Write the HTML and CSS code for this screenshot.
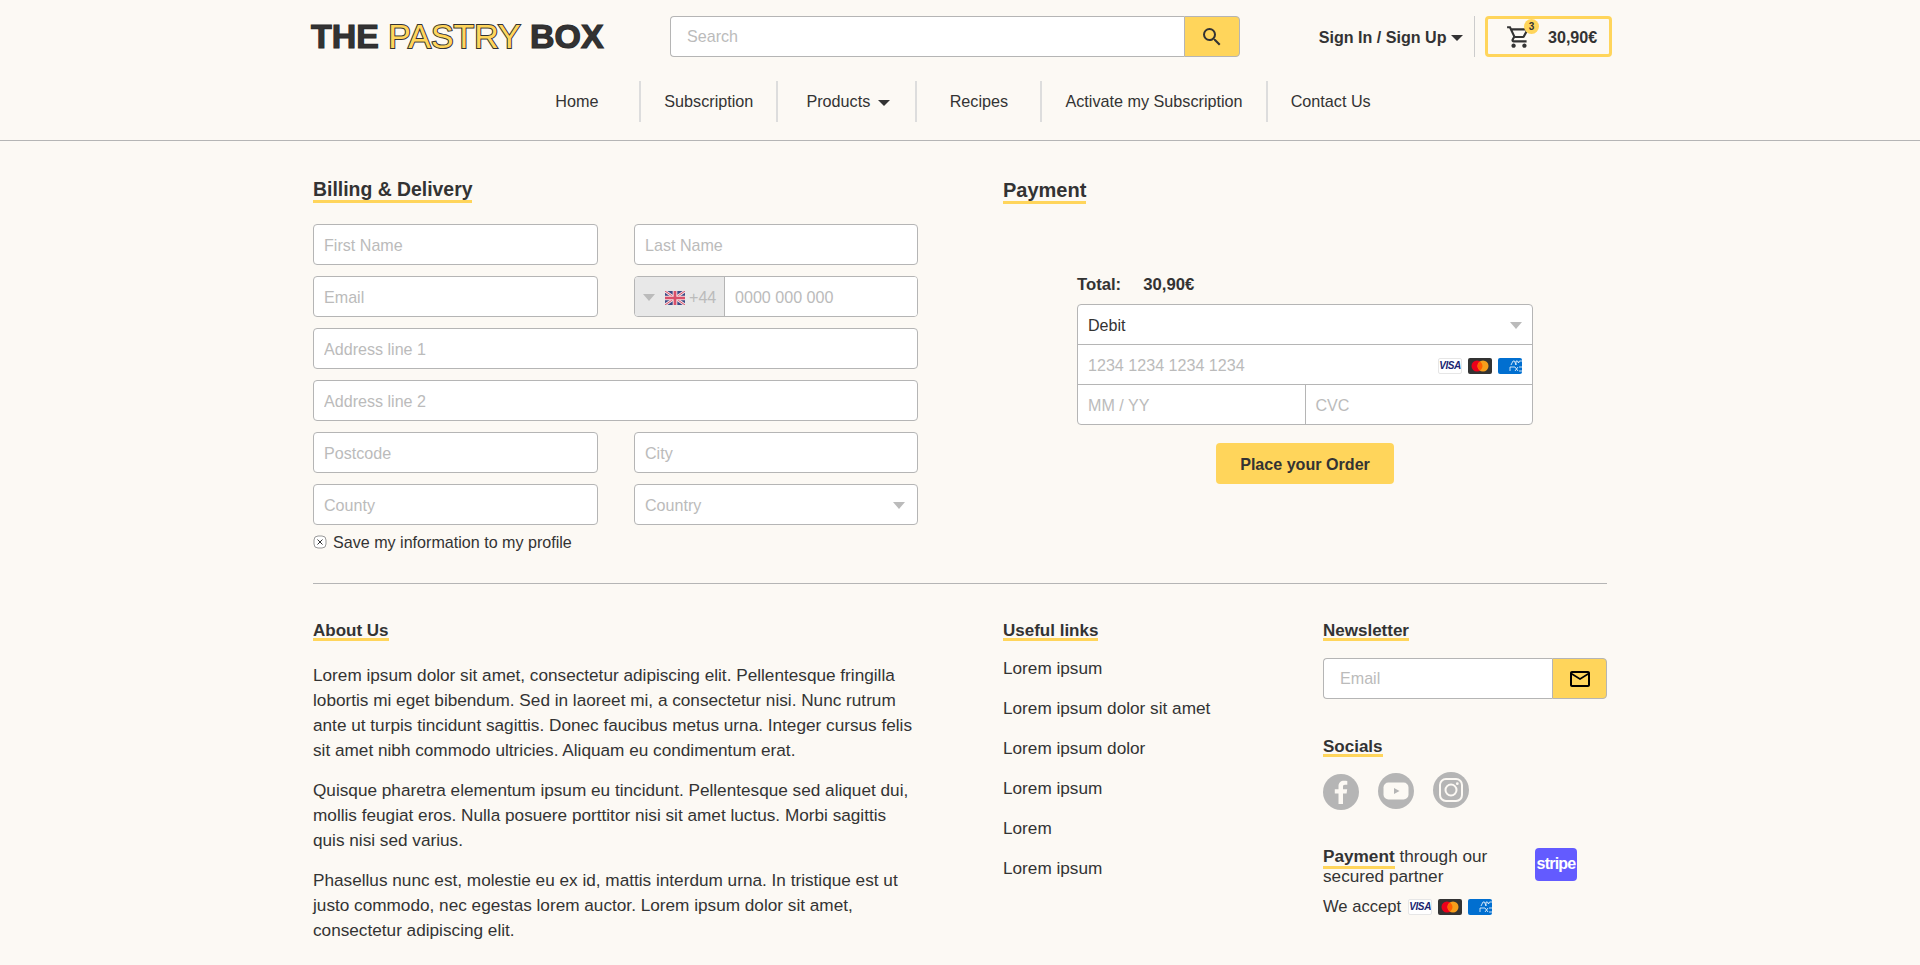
FILE: index.html
```html
<!DOCTYPE html>
<html lang="en">
<head>
<meta charset="UTF-8">
<title>The Pastry Box - Checkout</title>
<link rel="stylesheet" href="styles.css">
</head>
<body>

<!-- header -->
<header class="site-header">
  <div class="top-row">
    <a class="logo" href="#">THE <span class="logo-mid">PASTRY</span> BOX</a>
    <form class="search">
      <input type="text" placeholder="Search">
      <button type="button" class="search-button">
        <svg width="24" height="24" viewBox="0 0 24 24"><path fill="#333" d="M15.5 14h-.79l-.28-.27A6.47 6.47 0 0 0 16 9.5 6.5 6.5 0 1 0 9.5 16c1.61 0 3.09-.59 4.23-1.57l.27.28v.79l5 4.99L20.49 19l-4.99-5zm-6 0C7.01 14 5 11.99 5 9.5S7.01 5 9.5 5 14 7.01 14 9.5 11.99 14 9.5 14z"/></svg>
      </button>
    </form>
    <a class="account" href="#">Sign In / Sign Up <span class="caret"></span></a>
    <span class="top-divider"></span>
    <a class="cart" href="#">
      <span class="cart-icon">
        <svg width="26" height="26" viewBox="0 0 24 24"><path fill="#333" d="M15.55 13c.75 0 1.41-.41 1.75-1.03l3.58-6.49A.996.996 0 0 0 20.01 4H5.21l-.94-2H1v2h2l3.6 7.59-1.35 2.44C4.52 15.37 5.48 17 7 17h12v-2H7l1.1-2h7.45zM6.16 6h12.15l-2.76 5H8.53L6.16 6zM7 18c-1.1 0-1.99.9-1.99 2S5.9 22 7 22s2-.9 2-2-.9-2-2-2zm10 0c-1.1 0-1.99.9-1.99 2s.89 2 1.99 2 2-.9 2-2-.9-2-2-2z"/></svg>
        <span class="cart-badge">3</span>
      </span>
      <span class="cart-price">30,90€</span>
    </a>
  </div>
  <nav class="main-nav">
    <a href="#">Home</a>
    <a href="#">Subscription</a>
    <a class="nav-products" href="#">Products <span class="caret nav-caret"></span></a>
    <a href="#">Recipes</a>
    <a href="#">Activate my Subscription</a>
    <a href="#">Contact Us</a>
  </nav>
</header>

<!-- checkout -->
<main class="checkout">
  <section>
    <h2 class="section-title">Billing &amp; Delivery</h2>
    <form class="billing-form">
      <input type="text" placeholder="First Name">
      <input type="text" placeholder="Last Name">
      <input type="text" placeholder="Email">
      <div class="phone">
        <span class="phone-prefix">
          <span class="select-arrow"></span>
          <svg class="flag" width="20" height="14" viewBox="0 0 60 42">
            <rect width="60" height="42" fill="#3b4a86"/>
            <path d="M0 0L60 42M60 0L0 42" stroke="#f3dfe2" stroke-width="8"/>
            <path d="M0 0L60 42M60 0L0 42" stroke="#d8506a" stroke-width="3"/>
            <path d="M30 0V42M0 21H60" stroke="#f3dfe2" stroke-width="14"/>
            <path d="M30 0V42M0 21H60" stroke="#d8506a" stroke-width="8"/>
          </svg>
          +44
        </span>
        <input type="text" placeholder="0000 000 000">
      </div>
      <input class="wide" type="text" placeholder="Address line 1">
      <input class="wide" type="text" placeholder="Address line 2">
      <input type="text" placeholder="Postcode">
      <input type="text" placeholder="City">
      <input type="text" placeholder="County">
      <div class="select-field">
        Country
        <span class="select-arrow"></span>
      </div>
    </form>
    <label class="save-info">
      <svg width="14" height="14" viewBox="0 0 14 14"><rect x="1" y="1" width="12" height="12" rx="4" fill="#fff" stroke="#999"/><path d="M4.500 4.500l5 5M9.500 4.500l-5 5" stroke="#333"/></svg>
      Save my information to my profile
    </label>
  </section>

  <section class="payment-col">
    <h2 class="section-title">Payment</h2>
    <div class="payment-box">
      <p class="total"><span>Total:</span><span>30,90€</span></p>
      <div class="card-form">
        <div class="card-row">
          Debit
          <span class="select-arrow"></span>
        </div>
        <div class="card-row card-number">
          1234 1234 1234 1234
          <span class="card-icons">
            <span class="pay-card visa">VISA</span>
            <span class="pay-card master">
              <svg width="24" height="16" viewBox="0 0 24 16"><circle cx="9" cy="8" r="5.500" fill="#eb001b"/><circle cx="15" cy="8" r="5.500" fill="#f79e1b"/><path d="M12 3.400a5.500 5.500 0 0 1 0 9.200a5.500 5.500 0 0 1 0-9.200z" fill="#ff5f00"/></svg>
            </span>
            <span class="pay-card amex">
              <svg width="24" height="16" viewBox="0 0 24 16" fill="none" stroke="#fff" stroke-width=".8"><path d="M13 7l2-4h1.500l1.500 4M18 7V3h1.500l1 2 1-2H24M12 13V9h5M17 13l3-4M20 13l-3-4M21 9h3M21 13h3"/></svg>
            </span>
          </span>
        </div>
        <div class="card-split">
          <div class="card-cell">MM / YY</div>
          <div class="card-cell">CVC</div>
        </div>
      </div>
      <button type="button" class="order-button">Place your Order</button>
    </div>
  </section>
</main>

<!-- footer -->
<footer class="site-footer">
  <section>
    <h3 class="footer-title">About Us</h3>
    <div class="about-text">
      <p>Lorem ipsum dolor sit amet, consectetur adipiscing elit. Pellentesque fringilla lobortis mi eget bibendum. Sed in laoreet mi, a consectetur nisi. Nunc rutrum ante ut turpis tincidunt sagittis. Donec faucibus metus urna. Integer cursus felis sit amet nibh commodo ultricies. Aliquam eu condimentum erat.</p>
      <p>Quisque pharetra elementum ipsum eu tincidunt. Pellentesque sed aliquet dui, mollis feugiat eros. Nulla posuere porttitor nisi sit amet luctus. Morbi sagittis quis nisi sed varius.</p>
      <p>Phasellus nunc est, molestie eu ex id, mattis interdum urna. In tristique est ut justo commodo, nec egestas lorem auctor. Lorem ipsum dolor sit amet, consectetur adipiscing elit.</p>
    </div>
  </section>

  <section>
    <h3 class="footer-title">Useful links</h3>
    <ul class="useful-links">
      <li><a href="#">Lorem ipsum</a></li>
      <li><a href="#">Lorem ipsum dolor sit amet</a></li>
      <li><a href="#">Lorem ipsum dolor</a></li>
      <li><a href="#">Lorem ipsum</a></li>
      <li><a href="#">Lorem</a></li>
      <li><a href="#">Lorem ipsum</a></li>
    </ul>
  </section>

  <section>
    <h3 class="footer-title">Newsletter</h3>
    <form class="newsletter">
      <input type="text" placeholder="Email">
      <button type="button">
        <svg width="24" height="24" viewBox="0 0 24 24"><path fill="#000" d="M20 4H4c-1.100 0-1.990.9-1.990 2L2 18c0 1.100.9 2 2 2h16c1.100 0 2-.9 2-2V6c0-1.100-.9-2-2-2zm0 14H4V8l8 5 8-5v10zm-8-7L4 6h16l-8 5z"/></svg>
      </button>
    </form>

    <h3 class="footer-title socials-title">Socials</h3>
    <div class="socials">
      <svg class="social-fb" width="36" height="36" viewBox="0 0 36 36"><circle cx="18" cy="18" r="18" fill="#b5b5b5"/><path fill="#fcf9f4" d="M20 30V19.500h3.600l.6-4.200H20v-2.600c0-1.200.4-2 2-2h2.300V7c-.4 0-1.700-.2-3.300-.2-3.300 0-5.500 2-5.500 5.600v2.900h-3.700v4.200h3.700V30z"/></svg>
      <svg class="social-yt" width="36" height="36" viewBox="0 0 36 36"><circle cx="18" cy="18" r="18" fill="#b5b5b5"/><rect x="5.500" y="9.500" width="25" height="17" rx="5" fill="#fcf9f4"/><path fill="#b5b5b5" d="M16 15l5.500 3-5.500 3z"/></svg>
      <svg width="36" height="36" viewBox="0 0 36 36"><circle cx="18" cy="18" r="18" fill="#b5b5b5"/><rect x="7" y="7" width="22" height="22" rx="6" fill="none" stroke="#fcf9f4" stroke-width="2"/><circle cx="18" cy="18" r="5.500" fill="none" stroke="#fcf9f4" stroke-width="2"/><circle cx="24.300" cy="11.700" r="1.400" fill="#fcf9f4"/></svg>
    </div>

    <div class="partner">
      <p><span class="partner-strong">Payment</span> through our secured partner</p>
      <span class="stripe">stripe</span>
    </div>
    <div class="accept">
      We accept
      <span class="card-icons">
        <span class="pay-card visa">VISA</span>
        <span class="pay-card master">
          <svg width="24" height="16" viewBox="0 0 24 16"><circle cx="9" cy="8" r="5.500" fill="#eb001b"/><circle cx="15" cy="8" r="5.500" fill="#f79e1b"/><path d="M12 3.400a5.500 5.500 0 0 1 0 9.200a5.500 5.500 0 0 1 0-9.200z" fill="#ff5f00"/></svg>
        </span>
        <span class="pay-card amex">
          <svg width="24" height="16" viewBox="0 0 24 16" fill="none" stroke="#fff" stroke-width=".8"><path d="M13 7l2-4h1.500l1.500 4M18 7V3h1.500l1 2 1-2H24M12 13V9h5M17 13l3-4M20 13l-3-4M21 9h3M21 13h3"/></svg>
        </span>
      </span>
    </div>
  </section>
</footer>

</body>
</html>
```

FILE: styles.css
```css
* {
  box-sizing: border-box;
}

body {
  margin: 0;
  background-color: #fcf9f4;
  color: #333;
  font-family: "Liberation Sans", Arial, sans-serif;
  font-size: 16.1px;
}

a {
  color: inherit;
  text-decoration: none;
}

p {
  margin: 0;
}

input {
  height: 41px;
  width: 100%;
  padding: 0 10px;
  background-color: #fff;
  border: 1px solid #b5b5b5;
  border-radius: 4px;
  color: #333;
  font-family: inherit;
  font-size: 16.1px;
  outline: none;
}

input::placeholder {
  color: #bbb;
  opacity: 1;
}

button {
  font-family: inherit;
  cursor: pointer;
}

/* triangles */
.caret {
  display: inline-block;
  width: 0;
  height: 0;
  border-left: 6px solid transparent;
  border-right: 6px solid transparent;
  border-top: 6px solid #333;
  vertical-align: 2px;
}

.select-arrow {
  width: 0;
  height: 0;
  border-left: 6px solid transparent;
  border-right: 6px solid transparent;
  border-top: 7px solid #bbb;
}

/* header */
.site-header {
  border-bottom: 1px solid #b5b5b5;
  padding: 16px 313px 18px;
}

.top-row {
  display: flex;
  align-items: center;
  height: 41px;
  margin-right: -5px;
}

.logo {
  width: 359px;
  margin-left: -2px;
  color: #333;
  font-size: 33.9px;
  font-weight: bold;
  white-space: nowrap;
  -webkit-text-stroke: 1.2px #2d2d2d;
}

.logo-mid {
  color: #ffd55b;
  font-weight: normal;
  -webkit-text-stroke: 2px #333;
  paint-order: stroke fill;
}

.search {
  display: flex;
  width: 570px;
}

.search input {
  flex: 1;
  padding-left: 16px;
  border-right: 0;
  border-radius: 4px 0 0 4px;
}

.search-button {
  display: flex;
  align-items: center;
  justify-content: center;
  width: 56px;
  height: 41px;
  padding: 0;
  background-color: #ffd55b;
  border: 1px solid #b5b5b5;
  border-radius: 0 4px 4px 0;
}

.account {
  margin-left: auto;
  padding-top: 2px;
  font-weight: bold;
  white-space: nowrap;
}

.top-divider {
  width: 1px;
  height: 41px;
  margin: 0 10px 0 11px;
  background-color: #ccc;
}

.cart {
  display: flex;
  align-items: center;
  width: 127px;
  height: 41px;
  padding-left: 18px;
  border: 3px solid #ffd55b;
  border-radius: 4px;
}

.cart-icon {
  position: relative;
  display: flex;
}

.cart-badge {
  position: absolute;
  top: -5px;
  right: -7px;
  width: 15px;
  height: 15px;
  background-color: #ffd55b;
  border-radius: 50%;
  font-size: 10px;
  font-weight: bold;
  line-height: 15px;
  text-align: center;
}

.cart-price {
  margin-left: 16px;
  padding-top: 1px;
  font-weight: bold;
}

.main-nav {
  display: flex;
  justify-content: center;
  height: 41px;
  margin: 24px 6px 0 -6px;
}

.main-nav a {
  display: flex;
  align-items: center;
  justify-content: center;
  min-width: 125px;
  padding: 0 23px;
  border-left: 2px solid #ddd;
  font-size: 16.2px;
  white-space: nowrap;
}

.main-nav a:first-child {
  border-left: 0;
}

.main-nav .nav-products {
  justify-content: flex-start;
  gap: 8px;
  min-width: 139px;
  padding: 0 0 0 28px;
}

.nav-caret {
  margin-top: 2px;
}

/* checkout */
.checkout {
  display: grid;
  grid-template-columns: 605px 604px;
  column-gap: 85px;
  margin: 0 313px;
  padding: 36px 0 31px;
  border-bottom: 1px solid #b5b5b5;
}

.section-title {
  display: inline-block;
  margin: 0;
  padding-top: 2px;
  border-bottom: 3px solid #ffd55b;
  font-size: 19.4px;
  line-height: 21px;
}

.payment-col .section-title {
  font-size: 20px;
}

.billing-form {
  display: grid;
  grid-template-columns: 285px 284px;
  column-gap: 36px;
  row-gap: 11px;
  margin-top: 21px;
}

.billing-form input {
  padding-top: 2px;
}

.billing-form .wide {
  grid-column: span 2;
}

.phone {
  display: flex;
  height: 41px;
  background-color: #fff;
  border: 1px solid #b5b5b5;
  border-radius: 4px;
  overflow: hidden;
}

.phone input {
  flex: 1;
  height: 39px;
  border: 0;
  border-radius: 0;
}

.phone-prefix {
  display: flex;
  align-items: center;
  flex: none;
  width: 90px;
  padding: 2px 0 0 8px;
  background-color: #e8e8e8;
  border-right: 1px solid #b5b5b5;
  color: #bbb;
}

.phone-prefix .flag {
  margin: 0 4px 0 10px;
}

.select-field {
  display: flex;
  align-items: center;
  justify-content: space-between;
  height: 41px;
  padding: 2px 12px 0 10px;
  background-color: #fff;
  border: 1px solid #b5b5b5;
  border-radius: 4px;
  color: #bbb;
}

.save-info {
  display: flex;
  align-items: center;
  gap: 6px;
  margin-top: 7px;
  line-height: 20px;
}

.payment-col {
  padding-top: 1px;
}

.payment-box {
  width: 456px;
  margin: 70px 0 0 74px;
}

.total {
  display: flex;
  gap: 22px;
  padding-top: 1px;
  font-size: 16.7px;
  font-weight: bold;
  line-height: 20px;
}

.card-form {
  margin-top: 9px;
  background-color: #fff;
  border: 1px solid #b5b5b5;
  border-radius: 4px;
}

.card-row {
  display: flex;
  align-items: center;
  justify-content: space-between;
  height: 40px;
  padding: 2px 10px 0;
  border-bottom: 1px solid #b5b5b5;
}

.card-number {
  color: #bbb;
}

.card-split {
  display: flex;
  height: 39px;
}

.card-cell {
  display: flex;
  align-items: center;
  flex: 1;
  padding: 2px 10px 0;
  color: #bbb;
}

.card-cell + .card-cell {
  border-left: 1px solid #b5b5b5;
}

.card-icons {
  display: flex;
  gap: 6px;
}

.pay-card {
  display: block;
  width: 24px;
  height: 16px;
  border-radius: 2px;
  overflow: hidden;
}

.visa {
  background-color: #fff;
  border: 1px solid #e6e6e6;
  color: #1a1f71;
  font-size: 10px;
  font-style: italic;
  font-weight: bold;
  letter-spacing: -0.4px;
  line-height: 14px;
  text-align: center;
}

.master {
  background-color: #333;
}

.amex {
  background-color: #016fd0;
}

.order-button {
  display: block;
  width: 178px;
  height: 41px;
  margin: 18px auto 0;
  padding: 2px 0 0;
  background-color: #ffd55b;
  border: 0;
  border-radius: 4px;
  color: #333;
  font-size: 16.1px;
  font-weight: bold;
}

/* footer */
.site-footer {
  display: grid;
  grid-template-columns: 604px 234px 284px;
  column-gap: 86px;
  margin: 0 313px;
  padding-top: 38px;
}

.footer-title {
  width: fit-content;
  margin: 0;
  padding-top: 2px;
  border-bottom: 3px solid #ffd55b;
  font-size: 17px;
  line-height: 14px;
}

.about-text {
  margin-top: 22px;
  font-size: 17.2px;
  line-height: 25px;
}

.about-text p + p {
  margin-top: 15px;
}

.useful-links {
  margin: 7px 0 0;
  padding: 0;
  font-size: 17.2px;
  list-style: none;
}

.useful-links li {
  padding: 10px 0;
  line-height: 20px;
}

.newsletter {
  display: flex;
  margin-top: 17px;
}

.newsletter input {
  flex: 1;
  padding-left: 16px;
  border-right: 0;
  border-radius: 4px 0 0 4px;
}

.newsletter button {
  display: flex;
  align-items: center;
  justify-content: center;
  width: 55px;
  height: 41px;
  padding: 0;
  background-color: #ffd55b;
  border: 1px solid #b5b5b5;
  border-radius: 0 4px 4px 0;
}

.socials-title {
  margin-top: 39px;
}

.socials {
  display: flex;
  gap: 19px;
  margin-top: 15px;
}

.social-fb {
  margin-top: 2px;
}

.social-yt {
  margin-top: 1px;
}

.partner {
  display: flex;
  justify-content: space-between;
  margin-top: 36px;
  padding-right: 30px;
  font-size: 17.2px;
  line-height: 20px;
}

.partner p {
  width: 190px;
}

.partner-strong {
  padding-bottom: 3px;
  background: linear-gradient(#ffd55b, #ffd55b) left bottom / 100% 3px no-repeat;
  font-weight: bold;
}

.stripe {
  width: 42px;
  height: 33px;
  margin-top: 2px;
  background-color: #635bff;
  border-radius: 4px;
  color: #fff;
  font-size: 16px;
  font-weight: bold;
  letter-spacing: -0.8px;
  line-height: 32px;
  text-align: center;
}

.accept {
  display: flex;
  align-items: center;
  gap: 7px;
  margin-top: 11px;
  font-size: 16.6px;
  line-height: 20px;
}
```
